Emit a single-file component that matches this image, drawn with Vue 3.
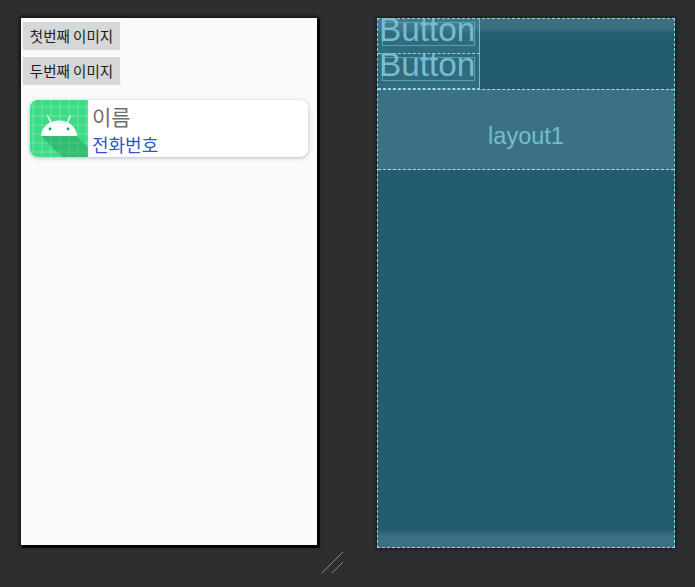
<script setup>
const gridV = [3, 12, 21, 30, 39, 48, 57]
const gridH = [7, 16, 25, 34, 43, 52]
</script>

<template>
  <div class="stage">
    <section class="phone">
      <button class="btn">첫번째 이미지</button>
      <button class="btn">두번째 이미지</button>
      <div class="card">
        <svg class="thumb" viewBox="0 0 58 57" width="58" height="57">
          <rect width="58" height="57" fill="#3ddc84" />
          <g stroke="#6fe6a6" stroke-width="1">
            <line v-for="g in gridV" :key="'v' + g" :x1="g" y1="0" :x2="g" y2="57" />
            <line v-for="g in gridH" :key="'h' + g" x1="0" :y1="g" x2="58" :y2="g" />
          </g>
          <path d="M11 36 H47 L58 47 V57 H32 Z" fill="#1f8f58" opacity="0.4" />
          <path d="M11 36 C11.5 27 19 20.5 29 20.5 C39 20.5 46.5 27 47 36 Z" fill="#fff" />
          <path d="M21 23 L17.5 15.5 M37 23 L40.5 15.5" stroke="#fff" stroke-width="1.3" />
          <circle cx="20" cy="29" r="1.4" fill="#1f9d5f" />
          <circle cx="38" cy="29" r="1.4" fill="#1f9d5f" />
        </svg>
        <div class="info">
          <div class="name">이름</div>
          <div class="phone-no">전화번호</div>
        </div>
      </div>
    </section>

    <section class="blueprint">
      <div class="bp-top">
        <div class="bp-btn"><span class="bp-inner"></span><span class="bp-text">Button</span></div>
        <div class="bp-btn"><span class="bp-inner"></span><span class="bp-text">Button</span></div>
      </div>
      <div class="bp-layout">layout1</div>
    </section>

    <svg class="handle" width="24" height="24" viewBox="0 0 24 24">
      <path d="M1 23 L22 2 M11 23 L22 12" stroke="#8a8a8a" stroke-width="1" fill="none" />
    </svg>
  </div>
</template>

<style>
html, body { margin: 0; background: #2d2e30; }
</style>

<style scoped>
.stage {
  position: relative;
  width: 695px;
  height: 587px;
  box-sizing: border-box;
  padding: 18px 0 0 21px;
  display: flex;
  align-items: flex-start;
  gap: 60px;
  background: #2d2e30;
  overflow: hidden;
}
.phone {
  width: 296px;
  height: 527px;
  flex: none;
  box-sizing: border-box;
  padding: 4px 0 0 2px;
  display: flex;
  flex-direction: column;
  align-items: flex-start;
  background: #fafafa;
  box-shadow: 2px 2px 0 1px #000, 0 0 3px 2px #161616;
}
.btn {
  width: 97px;
  height: 27px;
  margin: 0 0 8px;
  padding: 0;
  border: 0;
  background: #d6d7d7;
  color: #1c1c1c;
  font: 14.5px "Noto Sans CJK KR", "Noto Sans", sans-serif;
  box-shadow: 0 1px 1px rgba(0, 0, 0, .12);
}
.card {
  width: 278px;
  height: 57px;
  margin: 8px 0 0 7px;
  display: flex;
  background: #fff;
  border-radius: 8px;
  overflow: hidden;
  box-shadow: 0 1px 4px rgba(0, 0, 0, .25);
}
.thumb { flex: none; display: block; }
.info {
  padding-left: 4px;
  display: flex;
  flex-direction: column;
  font-family: "Noto Sans CJK KR", "Noto Sans", sans-serif;
}
.name { font-size: 21px; line-height: 32px; color: #6f6f6f; }
.phone-no { font-size: 18px; line-height: 25px; color: #2f55d4; }

.blueprint {
  width: 298px;
  height: 530px;
  flex: none;
  box-sizing: border-box;
  border: 1px dashed #8fd9ea;
  background: linear-gradient(#3a7082 0, #3a7082 9px, #235c6f 15px, #235c6f calc(100% - 17px), #3a7082 calc(100% - 11px));
  box-shadow: 0 0 3px 1px #16191b;
  display: flex;
  flex-direction: column;
}
.bp-top { height: 70px; flex: none; box-sizing: border-box; }
.bp-btn {
  position: relative;
  width: 102px;
  height: 35px;
  box-sizing: border-box;
  border-right: 1px solid #74b7c8;
  border-bottom: 1px dashed #8fd9ea;
  background: rgba(100, 170, 190, .2);
}
.bp-inner {
  position: absolute;
  left: 4px;
  right: 4px;
  top: 3px;
  bottom: 7px;
  border: 1px solid #5d9fb2;
}
.bp-text {
  position: absolute;
  left: 1px;
  top: -9px;
  font: 33.3px/40px "Liberation Sans", sans-serif;
  color: #74bdd2;
}
.bp-layout {
  height: 81px;
  flex: none;
  box-sizing: border-box;
  padding-top: 14px;
  border-top: 1px dashed #a5dfee;
  border-bottom: 1px dashed #a5dfee;
  background: #3a7183;
  color: #74bdd2;
  font: 23.5px "Liberation Sans", sans-serif;
  display: flex;
  align-items: center;
  justify-content: center;
}
.handle { position: absolute; left: 321px; top: 550px; }
</style>
